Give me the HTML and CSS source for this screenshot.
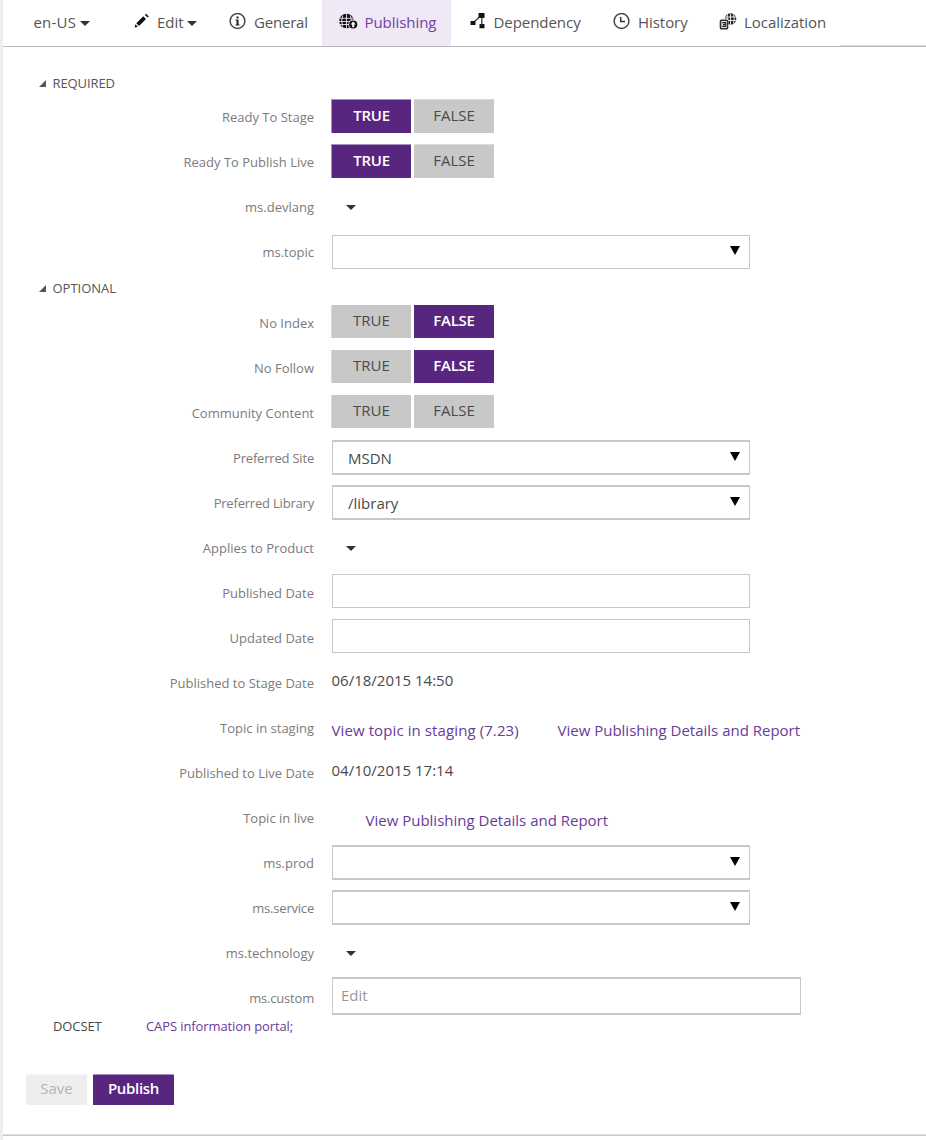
FILE: index.html
```html
<!DOCTYPE html>
<html lang="en">
<head>
<meta charset="utf-8">
<title>Publishing</title>
<link rel="stylesheet" href="styles.css">
</head>
<body>
<div class="page">
  <nav class="tabs">
    <a class="tab tab-lang"><span>en-US</span><i class="caret"></i></a>
    <a class="tab tab-edit"><svg class="icon" width="17" height="17" viewBox="0 0 17 17"><path fill="#111" d="M.5 14.600l.9-3.400 2.500 2.500zM2.300 10.300l7-7 2.700 2.700-7 7zM10.800 1.900l1.200-1.200 2.800 2.700-1.200 1.200z"/></svg><span>Edit</span><i class="caret"></i></a>
    <a class="tab tab-general"><svg class="icon" width="17" height="17" viewBox="0 0 17 17"><circle cx="8.500" cy="8" r="7.400" fill="none" stroke="#444" stroke-width="1.500"/><path fill="#222" d="M7.500 3.500h2v2h-2zM6.500 6.500h3v5h1v1h-4v-1h1v-4h-1z"/></svg><span>General</span></a>
    <a class="tab tab-publishing"><svg class="icon" width="19" height="17" viewBox="0 0 19 17"><circle cx="7.500" cy="8" r="7.300" fill="#111"/><path d="M7.500 1v14M3.700 2.500q-2 5.500 0 11M11.300 2.500q1 2.500 1 6M1 5.300h13M0 8.500h14M1 11.500h9" fill="none" stroke="#f0e7f7" stroke-width=".9"/><circle cx="14.200" cy="11.500" r="4.900" fill="#f0e7f7"/><circle cx="14.200" cy="11.500" r="4.100" fill="#111"/><path d="M14.200 8.600l2.600 2.900h-1.600v2.800h-2v-2.800h-1.600z" fill="#fff"/></svg><span>Publishing</span></a>
    <a class="tab tab-dependency"><svg class="icon" width="15" height="17" viewBox="0 0 15 17"><path fill="#111" d="M8.500 1h6v5h-6zM.5 9h5v4h-5zM9.500 12h5v4.200h-5z"/><path d="M4.500 9.500L9.500 5M11.800 5v8" fill="none" stroke="#333" stroke-width="1.300"/></svg><span>Dependency</span></a>
    <a class="tab tab-history"><svg class="icon" width="17" height="17" viewBox="0 0 17 17"><circle cx="8.500" cy="8" r="7.400" fill="none" stroke="#444" stroke-width="1.500"/><path d="M7.700 4v4.500H12" fill="none" stroke="#333" stroke-width="1.500"/></svg><span>History</span></a>
    <a class="tab tab-local"><svg class="icon" width="18" height="17" viewBox="0 0 18 17"><circle cx="11.500" cy="6" r="5.800" fill="#222"/><path d="M11.500.8v11M8.500 1.500q-1 4 0 9M14.500 1.500q1.500 4 0 9M6 4h11M6 7.500h11" fill="none" stroke="#fff" stroke-width=".9"/><path fill="#fff" d="M0 5.500h9.500V17H0z"/><rect x="1.500" y="7.200" width="7" height="8.600" rx=".8" fill="#ddd" stroke="#333" stroke-width="1.600"/><path d="M3.300 9.600h3v3.800h-3M4 11.500h2.300" fill="none" stroke="#222" stroke-width="1.200"/></svg><span>Localization</span></a>
    <span class="tabs-rest"></span>
  </nav>

  <h2 class="section first"><svg class="tri" width="7" height="7" viewBox="0 0 7 7"><path d="M7 0v7H0z" fill="#555"/></svg><span>REQUIRED</span></h2>
  <div class="rows">
    <div class="row"><label>Ready To Stage</label><div class="toggle"><b class="on">TRUE</b><b>FALSE</b></div></div>
    <div class="row"><label>Ready To Publish Live</label><div class="toggle"><b class="on">TRUE</b><b>FALSE</b></div></div>
    <div class="row"><label>ms.devlang</label><i class="caret drop"></i></div>
    <div class="row"><label>ms.topic</label><div class="box select thin"><span></span><i class="arrow"></i></div></div>
  </div>
  <h2 class="section second"><svg class="tri" width="7" height="7" viewBox="0 0 7 7"><path d="M7 0v7H0z" fill="#555"/></svg><span>OPTIONAL</span></h2>
  <div class="rows">
    <div class="row"><label>No Index</label><div class="toggle flat"><b>TRUE</b><b class="on">FALSE</b></div></div>
    <div class="row"><label>No Follow</label><div class="toggle flat"><b>TRUE</b><b class="on">FALSE</b></div></div>
    <div class="row"><label>Community Content</label><div class="toggle flat"><b>TRUE</b><b>FALSE</b></div></div>
    <div class="row"><label class="tight">Preferred Site</label><div class="box select"><span>MSDN</span><i class="arrow"></i></div></div>
    <div class="row"><label class="tight">Preferred Library</label><div class="box select"><span>/library</span><i class="arrow"></i></div></div>
    <div class="row"><label>Applies to Product</label><i class="caret drop"></i></div>
    <div class="row"><label>Published Date</label><div class="box thin up"></div></div>
    <div class="row"><label>Updated Date</label><div class="box thin up"></div></div>
    <div class="row"><label>Published to Stage Date</label><span class="date">06/18/2015 14:50</span></div>
    <div class="row"><label>Topic in staging</label><div class="links"><a class="link-topic">View topic in staging (7.23)</a><a>View Publishing Details and Report</a></div></div>
    <div class="row"><label>Published to Live Date</label><span class="date">04/10/2015 17:14</span></div>
    <div class="row"><label>Topic in live</label><div class="links indent"><a>View Publishing Details and Report</a></div></div>
    <div class="row"><label>ms.prod</label><div class="box select"><span></span><i class="arrow"></i></div></div>
    <div class="row"><label class="tight">ms.service</label><div class="box select"><span></span><i class="arrow"></i></div></div>
    <div class="row"><label>ms.technology</label><i class="caret drop"></i></div>
    <div class="row"><label class="tight">ms.custom</label><div class="box custom">Edit</div></div>
  </div>
  <div class="docset"><span class="docset-name">DOCSET</span><a>CAPS information portal;</a></div>
  <div class="actions"><button class="save">Save</button><button class="publish">Publish</button></div>
</div>
</body>
</html>
```
FILE: styles.css
```css
*, *::after { box-sizing: border-box; }
body { margin: 0; background: #fff; color: #4a4a4a; font: 15px "Open Sans", "Noto Sans", sans-serif; }
.page { height: 1140px; border-left: 3px solid #eee; overflow: hidden; display: flex; flex-direction: column; }
.page::after { content: ""; margin-top: auto; margin-bottom: 4px; height: 2px; background: #c8c8c8; border-top: 1px solid #e0e0e0; flex: none; }
.tabs { display: grid; grid-template-columns: 131px 95px 93px 129px 162px 106px 121px 1fr; height: 47px; border-bottom: 1px solid #bababa; flex: none; }
.tab { display: flex; align-items: flex-start; line-height: 44px; white-space: nowrap; color: #555; letter-spacing: -0.05px; }
.tab .icon { margin-top: 13px; flex: none; }
.tab-lang { padding-left: 30.5px; letter-spacing: 0.2px; }
.tab-edit .icon { margin-right: 6px; }
.tab-general .icon, .tab-history .icon { margin-right: 8px; }
.tab-general { letter-spacing: -0.2px; }
.tab-publishing { background: #f0e7f7; color: #7441a3; padding-left: 17px; }
.tab-publishing .icon { margin-right: 6.5px; }
.tab-dependency { padding-left: 19px; }
.tab-dependency .icon { margin-right: 8.5px; margin-top: 12px; }
.tab-local .icon { margin-right: 7px; }
.tabs-rest { border-bottom: 1px solid #ddd; }
.caret { width: 0; height: 0; border: 5px solid transparent; border-top-color: #333; border-bottom: 0; flex: none; }
.tab .caret { margin: 21px 0 0 4px; }
.section { display: flex; align-items: center; margin: 0; font-size: 13px; font-weight: 400; line-height: 20px; height: 26px; padding: 0 0 6px 36px; color: #555; flex: none; }
.section.first { margin-top: 26px; }
.section.second { margin-top: -1px; height: 27px; padding-bottom: 7px; }
.section span { margin-left: 6.5px; letter-spacing: -0.1px; }
.section.second span { letter-spacing: 0; }
.tri { flex: none; }
.rows { flex: none; }
.row { height: 45px; display: grid; grid-template-columns: 311px 1fr; column-gap: 18px; align-items: start; }
.row label { font-size: 13px; line-height: 36px; text-align: right; color: #7b7b7b; white-space: nowrap; }
.row label.tight { letter-spacing: -0.2px; }
.toggle { display: flex; gap: 3px; margin-left: -1px; }
.toggle b { width: 80px; height: 34px; line-height: 31px; font-weight: 400; text-align: center; background: #c8c8c8; border-top: 1px solid #dadada; }
.toggle b:first-child { border-left: 1px solid #dadada; }
.toggle .on { background: #58267e; color: #fff; font-weight: 600; letter-spacing: -0.25px; border-top-color: #a78fbb; }
.toggle .on:first-child { border-left-color: #a78fbb; }
.toggle.flat b { height: 33px; border-top-width: 0; }
.drop { margin: 16px 0 0 14px; }
.box { width: 418px; height: 35px; border: 1px solid #c8c8c8; border-width: 2px 1px; line-height: 32px; }
.box.thin { height: 34px; border-width: 1px; margin-top: 1px; }
.box.up { margin-top: -1px; }
.select { display: flex; justify-content: space-between; padding: 0 9px 0 15px; }
.arrow { width: 0; height: 0; border: 5px solid transparent; border-top: 9px solid #000; border-bottom: 0; margin-top: 10px; }
.box.custom { width: 469px; height: 38px; margin-top: -3px; padding-left: 8px; color: #999; }
.date { line-height: 30px; margin-left: -0.5px; }
.links { display: flex; line-height: 41px; white-space: nowrap; margin-left: -0.5px; }
.links a, .docset a { color: #6a3a9a; }
.link-topic { width: 226px; letter-spacing: 0.1px; }
.indent { padding-left: 34px; }
.docset { display: flex; height: 20px; line-height: 20px; padding-left: 50px; margin-top: -9px; font-size: 13px; letter-spacing: -0.1px; flex: none; }
.docset-name { width: 93px; }
.actions { display: flex; gap: 6px; margin: 38px 0 0 23px; flex: none; }
.actions button { height: 31px; border: 0; border-top: 1px solid #f6f6f6; padding: 0 0 4px; font: 15px/26px "Open Sans", "Noto Sans", sans-serif; }
.save { width: 61px; background: #eee; color: #b5b5b5; }
.actions .publish { width: 81px; background: #58267e; color: #fff; font-weight: 600; letter-spacing: -0.3px; border-top-color: #a78fbb; }
```
